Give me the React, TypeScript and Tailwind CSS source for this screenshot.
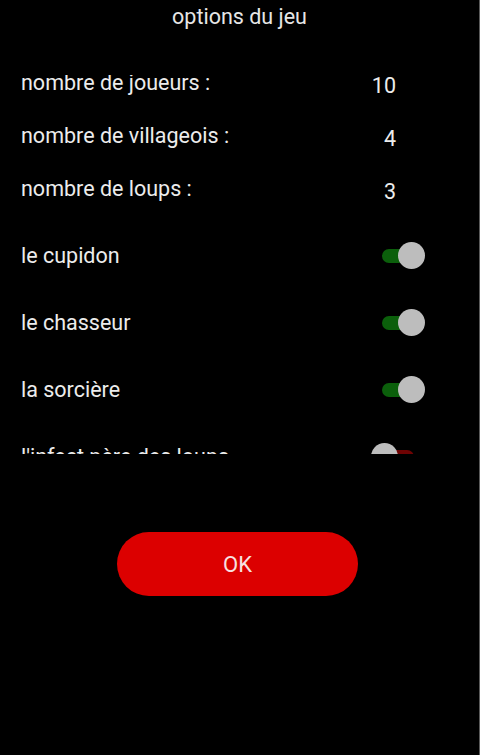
import React from "react";

interface CountRowProps {
  label: string;
  value: number;
}

const CountRow: React.FC<CountRowProps> = ({ label, value }) => (
  <div className="flex h-[53px] items-center justify-between pl-[21px] pr-[83px]">
    <span>{label}</span>
    <span className="pt-[6px]">{value}</span>
  </div>
);

interface ToggleRowProps {
  label: string;
  checked: boolean;
}

const Toggle: React.FC<{ checked: boolean }> = ({ checked }) => (
  <div className="relative h-[28px] w-[54px]">
    <div
      className={
        checked
          ? "absolute left-[11px] top-[7px] h-[14px] w-[32px] rounded-full bg-[#0b5f0b]"
          : "absolute left-[11px] top-[7px] h-[14px] w-[32px] rounded-full bg-[#6e0303]"
      }
    />
    <div
      className={
        checked
          ? "absolute left-[27px] top-0 h-[27px] w-[27px] rounded-full bg-[#bdbdbd]"
          : "absolute left-0 top-0 h-[27px] w-[27px] rounded-full bg-[#bdbdbd]"
      }
    />
  </div>
);

const ToggleRow: React.FC<ToggleRowProps> = ({ label, checked }) => (
  <div className="flex h-[67px] items-center justify-between pl-[21px] pr-[54px]">
    <span>{label}</span>
    <Toggle checked={checked} />
  </div>
);

export default function App() {
  return (
    <div
      className="flex h-[755px] w-[480px] flex-col overflow-hidden border-r border-[#5a5a5a] bg-black text-[21.5px] leading-[25px] text-[#ececec]"
      style={{ fontFamily: "Roboto, 'Noto Sans', sans-serif" }}
    >
      <div className="h-[75px] shrink-0 pt-[4px] text-center text-[#e6e6e6]">options du jeu</div>

      <div className="h-[379px] shrink-0 overflow-hidden">
        <div className="-mt-[19px]">
          <CountRow label="nombre de joueurs :" value={10} />
          <CountRow label="nombre de villageois :" value={4} />
          <CountRow label="nombre de loups :" value={3} />
          <div className="mt-[7px]">
            <ToggleRow label="le cupidon" checked />
            <ToggleRow label="le chasseur" checked />
            <ToggleRow label="la sorcière" checked />
            <ToggleRow label="l'infect père des loups" checked={false} />
          </div>
        </div>
      </div>

      <button className="ml-[117px] mt-[78px] h-[64px] w-[241px] shrink-0 rounded-full bg-[#dc0000] text-[22px] text-[#f7e0e0]">
        OK
      </button>
    </div>
  );
}
